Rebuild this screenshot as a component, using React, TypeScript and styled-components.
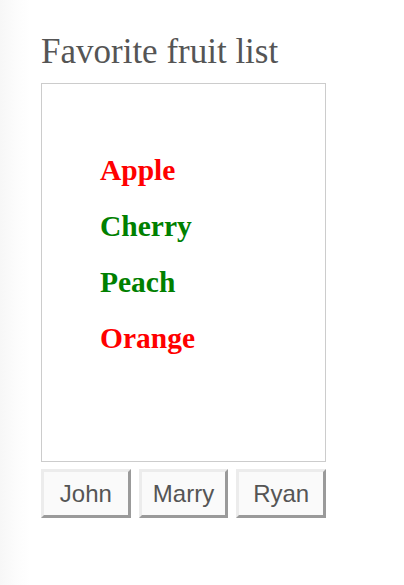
import React from "react";
import styled, { createGlobalStyle } from "styled-components";

const Global = createGlobalStyle`
  html, body {
    margin: 0;
    padding: 0;
    min-height: 100%;
  }
  body {
    min-height: 585px;
    background: linear-gradient(to right, #f7f7f7 0px, #fcfcfc 16px, #ffffff 30px);
  }
`;

const Page = styled.div`
  padding: 32px 0 0 41px;
  display: flex;
  flex-direction: column;
  width: 285px;
`;

const Title = styled.h1`
  margin: 0 0 11px 0;
  font-family: "Liberation Serif", "Times New Roman", serif;
  font-weight: normal;
  font-size: 35px;
  line-height: 40px;
  color: #555555;
  white-space: nowrap;
`;

const ListBox = styled.div`
  box-sizing: border-box;
  width: 285px;
  height: 379px;
  border: 1px solid #cccccc;
  background: #ffffff;
  padding: 58px 0 0 58px;
`;

const FruitList = styled.ul`
  list-style: none;
  margin: 0;
  padding: 0;
`;

const Fruit = styled.li<{ $fav: boolean }>`
  font-family: "Liberation Serif", "Times New Roman", serif;
  font-weight: bold;
  font-size: 29.5px;
  line-height: 56px;
  color: ${(p) => (p.$fav ? "#008000" : "#ff0000")};
`;

const ButtonRow = styled.div`
  display: flex;
  gap: 8px;
  margin-top: 7px;
`;

const PersonButton = styled.button`
  box-sizing: border-box;
  width: 90px;
  height: 49px;
  padding: 0;
  background: #fafafa;
  border-style: solid;
  border-width: 3px;
  border-color: #ececec #9a9a9a #9a9a9a #ececec;
  font-family: "Liberation Sans", Arial, sans-serif;
  font-size: 24px;
  color: #555555;
  cursor: pointer;
`;

const fruits = [
  { name: "Apple", fav: false },
  { name: "Cherry", fav: true },
  { name: "Peach", fav: true },
  { name: "Orange", fav: false },
];

export default function App() {
  return (
    <>
      <Global />
      <Page>
        <Title>Favorite fruit list</Title>
        <ListBox>
          <FruitList>
            {fruits.map((f) => (
              <Fruit key={f.name} $fav={f.fav}>
                {f.name}
              </Fruit>
            ))}
          </FruitList>
        </ListBox>
        <ButtonRow>
          <PersonButton>John</PersonButton>
          <PersonButton>Marry</PersonButton>
          <PersonButton>Ryan</PersonButton>
        </ButtonRow>
      </Page>
    </>
  );
}
